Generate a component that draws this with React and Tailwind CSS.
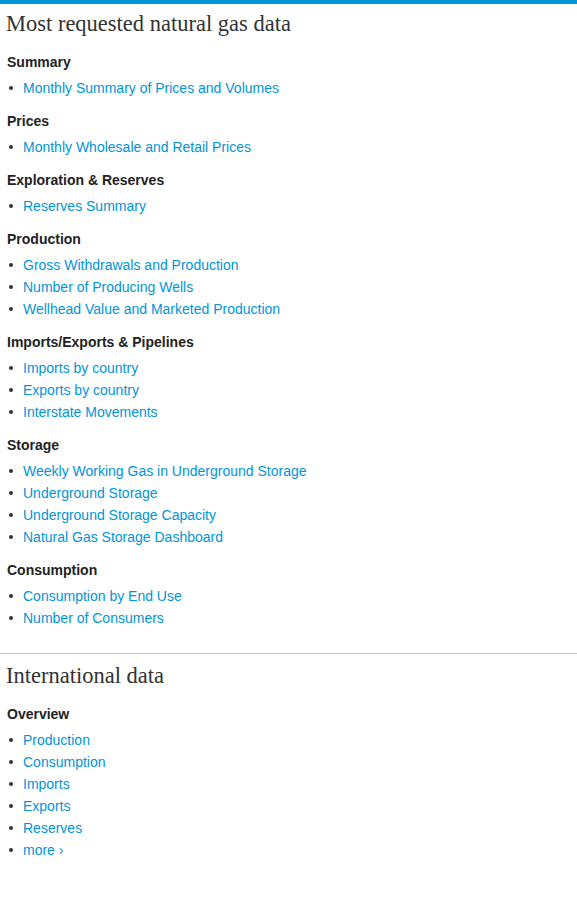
const SECTIONS = [
  { title: 'Summary', links: ['Monthly Summary of Prices and Volumes'] },
  { title: 'Prices', links: ['Monthly Wholesale and Retail Prices'] },
  { title: 'Exploration & Reserves', links: ['Reserves Summary'] },
  {
    title: 'Production',
    links: ['Gross Withdrawals and Production', 'Number of Producing Wells', 'Wellhead Value and Marketed Production'],
  },
  {
    title: 'Imports/Exports & Pipelines',
    links: ['Imports by country', 'Exports by country', 'Interstate Movements'],
  },
  {
    title: 'Storage',
    links: [
      'Weekly Working Gas in Underground Storage',
      'Underground Storage',
      'Underground Storage Capacity',
      'Natural Gas Storage Dashboard',
    ],
  },
  { title: 'Consumption', links: ['Consumption by End Use', 'Number of Consumers'] },
];

const INTERNATIONAL = [
  { title: 'Overview', links: ['Production', 'Consumption', 'Imports', 'Exports', 'Reserves', 'more ›'] },
];

const Group = ({ title, links }) => (
  <div className="mb-3">
    <h3 className="pl-[7px] text-[14px] leading-[20px] font-bold text-[#222] mb-[5px]">{title}</h3>
    <ul>
      {links.map((l) => (
        <li key={l} className="flex items-center h-[22px]">
          <span className="ml-[9px] w-[4px] h-[4px] rounded-full bg-[#333]" />
          <a href="#" className="ml-[10px] text-[14px] leading-[22px] text-[#0095d8]">
            {l}
          </a>
        </li>
      ))}
    </ul>
  </div>
);

const Block = ({ heading, groups }) => (
  <section>
    <h2 className="pl-[6px] text-[22.5px] leading-[28px] text-[#333] mb-[14px] font-['Liberation_Serif',serif]">
      {heading}
    </h2>
    {groups.map((g) => (
      <Group key={g.title} {...g} />
    ))}
  </section>
);

export default function App() {
  return (
    <div className="min-h-[898px] bg-white font-['Liberation_Sans',Arial,sans-serif]">
      <div className="h-[4px] bg-[#0096d6]" />
      <div className="pt-[6px] pb-[12px]">
        <Block heading="Most requested natural gas data" groups={SECTIONS} />
      </div>
      <div className="border-t border-[#c8c8c8] pt-[8px]">
        <Block heading="International data" groups={INTERNATIONAL} />
      </div>
    </div>
  );
}
